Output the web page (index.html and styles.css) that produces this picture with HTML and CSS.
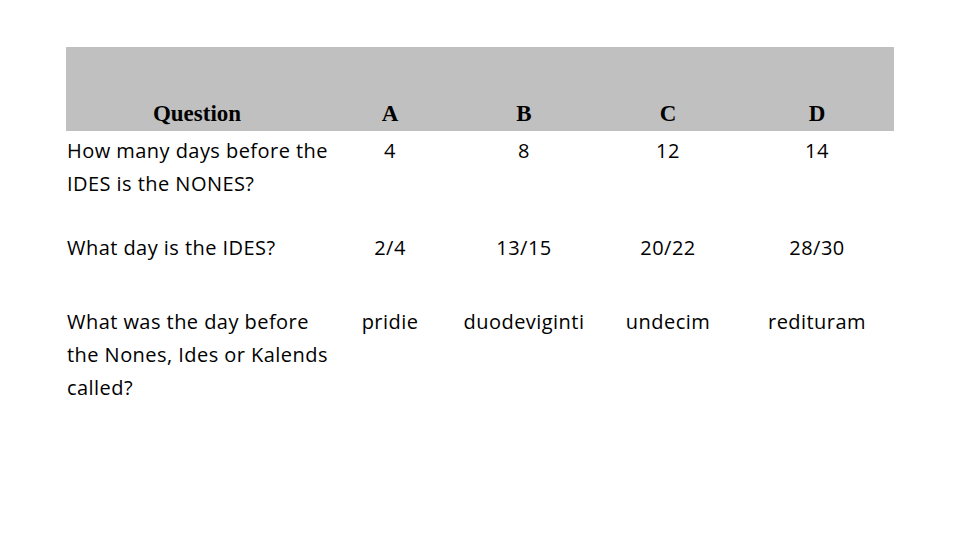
FILE: index.html
```html
<!DOCTYPE html>
<html>
<head>
<meta charset="utf-8">
<link rel="stylesheet" href="styles.css">
</head>
<body>
<div class="quiz">
  <div class="cell head q">Question</div>
  <div class="cell head">A</div>
  <div class="cell head">B</div>
  <div class="cell head">C</div>
  <div class="cell head">D</div>

  <div class="cell q r1">How many days before the<br>IDES is the NONES?</div>
  <div class="cell r1">4</div>
  <div class="cell r1">8</div>
  <div class="cell r1">12</div>
  <div class="cell r1">14</div>

  <div class="cell q r2">What day is the IDES?</div>
  <div class="cell r2">2/4</div>
  <div class="cell r2">13/15</div>
  <div class="cell r2">20/22</div>
  <div class="cell r2">28/30</div>

  <div class="cell q r3">What was the day before<br>the Nones, Ides or Kalends<br>called?</div>
  <div class="cell r3">pridie</div>
  <div class="cell r3">duodeviginti</div>
  <div class="cell r3">undecim</div>
  <div class="cell r3">redituram</div>
</div>
</body>
</html>
```
FILE: styles.css
```css
html, body {
  margin: 0;
  padding: 0;
  background: #ffffff;
  width: 960px;
  height: 540px;
  overflow: hidden;
}
.quiz {
  margin: 47px 0 0 66px;
  width: 828px;
  display: grid;
  grid-template-columns: 262px 124px 144px 144px 154px;
  grid-template-rows: 84px 97px 74px 120px;
  font-family: "Open Sans", "Liberation Sans", sans-serif;
  font-size: 20px;
  letter-spacing: 0.45px;
  color: #000;
}
.cell {
  text-align: center;
  line-height: 33px;
  padding-top: 3px;
  white-space: nowrap;
}
.cell.q {
  text-align: left;
  padding-left: 1px;
}
.cell.head {
  background: #c0c0c0;
  font-family: "Liberation Serif", "Times New Roman", serif;
  font-weight: bold;
  font-size: 23px;
  letter-spacing: 0;
  display: flex;
  align-items: flex-end;
  justify-content: center;
  padding: 0 0 1px 0;
}
.cell.head.q {
  justify-content: center;
  padding-left: 0;
}
```
